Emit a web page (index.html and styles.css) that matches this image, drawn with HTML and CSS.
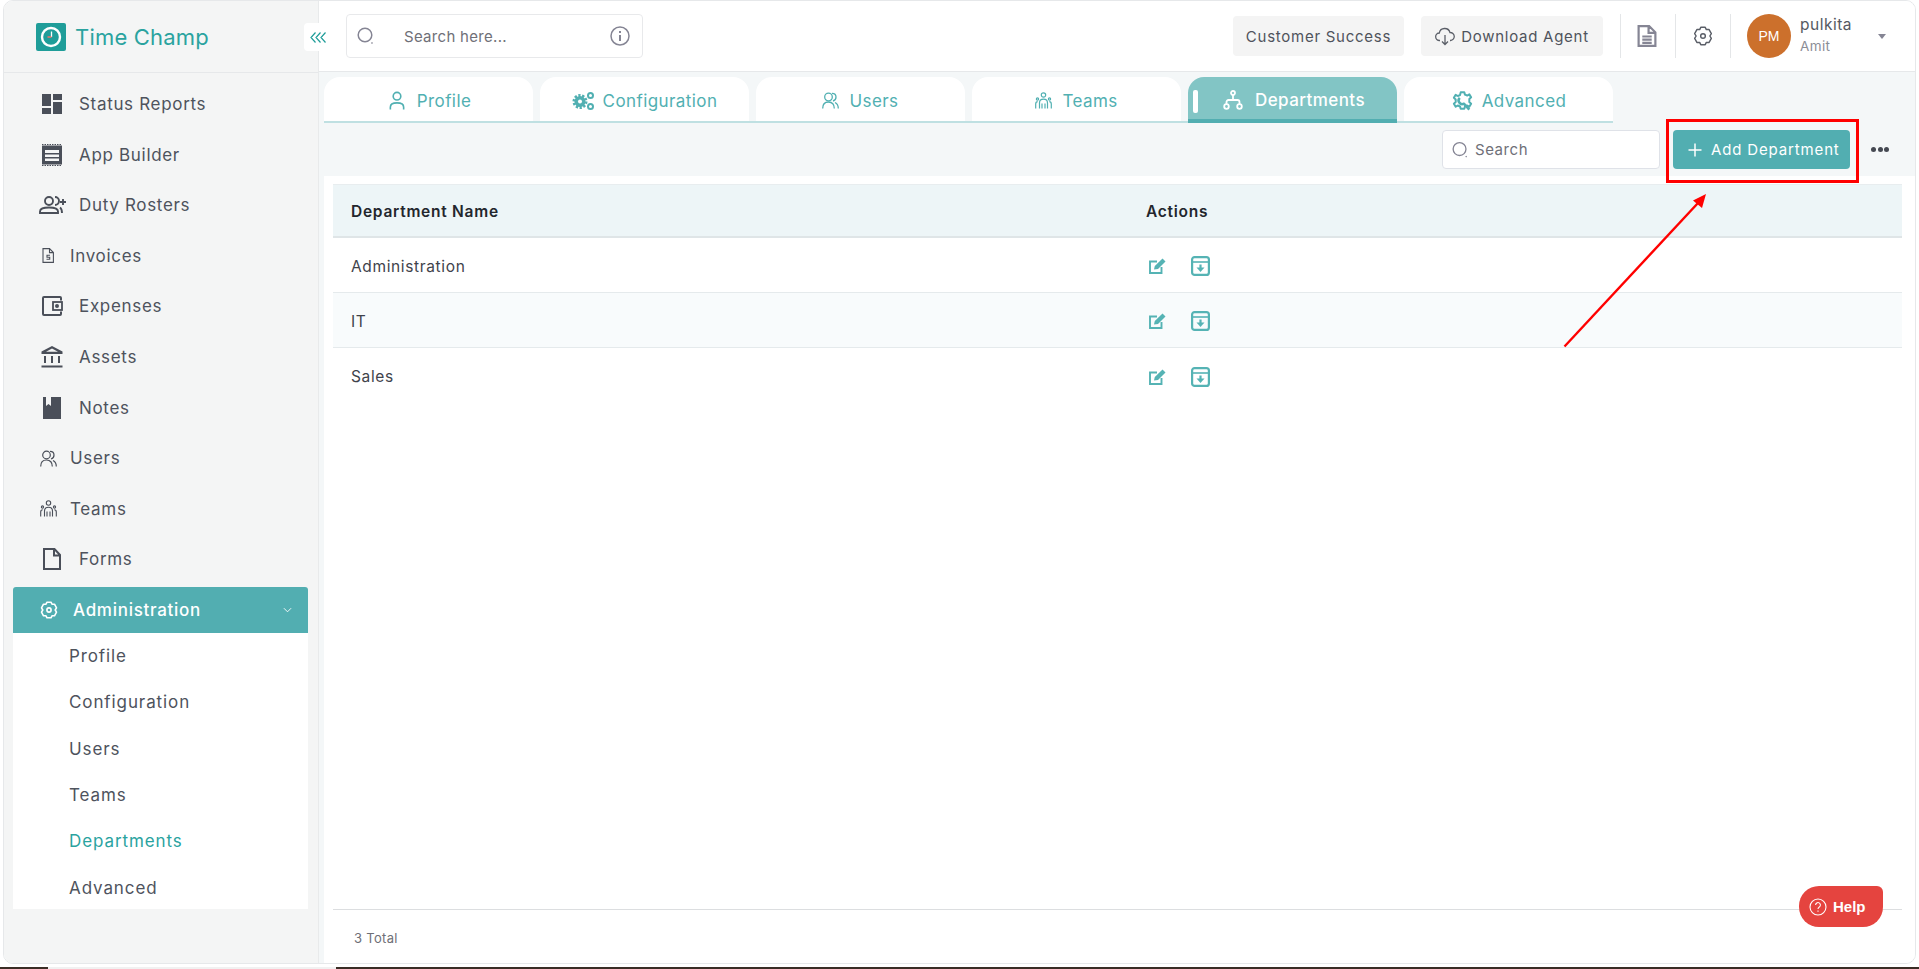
FILE: index.html
```html
<!DOCTYPE html>
<html lang="en">
<head>
<meta charset="utf-8">
<title>Time Champ</title>
<link rel="stylesheet" href="styles.css">
</head>
<body>
<div class="app">
  <aside class="sidebar">
    <div class="brand">
      <svg class="logo" viewBox="0 0 30 28"><rect width="30" height="28" rx="2" fill="#1f9d99"/><circle cx="15" cy="14" r="9" fill="none" stroke="#fff" stroke-width="2.400"/><path d="M15.500 8.500V14" fill="none" stroke="#fff" stroke-width="1.300"/><path d="M15.500 14H11.500" fill="none" stroke="#f0736b" stroke-width="1.300"/></svg>
      <span class="brand-name">Time Champ</span>
    </div>
    <nav class="nav">
      <a class="nav-item"><svg class="ic" viewBox="0 0 20 20" fill="#4a4f59"><path d="M0 0h9v12H0zM11 0h9v6h-9zM11 8h9v12h-9zM0 14h9v6H0z"/></svg><span>Status Reports</span></a>
      <a class="nav-item"><svg class="ic tall" viewBox="0 0 20 22" fill="#4a4f59"><path fill-rule="evenodd" d="M0 1.500h20v19H0zM3 6v3h14V6zM3 10.500V13h14v-2.500zM3 14.500V17h14v-2.500z"/><path d="M0 .500h20M0 21.500h20" stroke="#4a4f59" stroke-width="1.200" stroke-dasharray="1.500 1"/></svg><span>App Builder</span></a>
      <a class="nav-item"><svg class="ic wide" viewBox="0 0 27 18" fill="none" stroke="#4a4f59" stroke-width="1.900"><circle cx="10" cy="5" r="4"/><path d="M1 17v-1.500C1 12.500 4 11.500 10 11.500s9 1 9 4v1.500zM16 1a4 4 0 0 1 0 8M21 11.500c1.500 1 2 2.500 2 5.500M21 6h6M24 3v6"/></svg><span>Duty Rosters</span></a>
      <a class="nav-item small"><svg class="ic tiny" viewBox="0 0 12 15" fill="none" stroke="#4a4f59" stroke-width="1.100"><path d="M1 .600h6.500L11.400 4.500v9.900H1zM7.500.600v4h3.900M8 7.300H5v1.900h2.700v2H4.500"/></svg><span>Invoices</span></a>
      <a class="nav-item"><svg class="ic exp" viewBox="0 0 21 20" fill="none" stroke="#4a4f59" stroke-width="2"><path d="M19 4.500V2a1 1 0 0 0-1-1H2a1 1 0 0 0-1 1v16a1 1 0 0 0 1 1h16a1 1 0 0 0 1-1v-2.500"/><rect x="11" y="6" width="9" height="8" stroke-width="1.800"/><circle cx="15" cy="10" r="1" fill="#4a4f59"/></svg><span>Expenses</span></a>
      <a class="nav-item"><svg class="ic wide21" viewBox="0 0 22 22" fill="#4a4f59"><path d="M11 0l10.500 5.500V8H.500V5.500zM11 2.400L5 5.700h12zM3 10h2v7H3zM10 10h2v7h-2zM17 10h2v7h-2zM.500 19.500h21v2H.500z"/></svg><span>Assets</span></a>
      <a class="nav-item"><svg class="ic page" viewBox="0 0 18 22" fill="#4a4f59"><path fill-rule="evenodd" d="M0 0h18v22H0zM3 0v9l2.500-2L8 9V0z"/></svg><span>Notes</span></a>
      <a class="nav-item small"><svg class="ic users" viewBox="0 0 17 17" fill="none" stroke="#4a4f59" stroke-width="1.200"><circle cx="6.500" cy="5" r="3.800"/><path d="M.700 16.500c0-4 2-6.500 5.800-6.500s5.800 2.500 5.800 6.500M10 1.300c2.500 0 4 1.700 4 3.700S12.800 8.500 11 9M13 10.500c2 1 3.300 3 3.300 6"/></svg><span>Users</span></a>
      <a class="nav-item small"><svg class="ic users" viewBox="0 0 17 17" fill="none" stroke="#4a4f59" stroke-width="1.100"><circle cx="8.500" cy="3" r="2.200"/><circle cx="2.500" cy="7" r="1.100"/><circle cx="14.500" cy="7" r="1.100"/><path d="M4.500 16.500V11c0-2.500 1.500-3.800 4-3.800s4 1.300 4 3.800v5.500M7 16.500v-5M10 16.500v-5M.700 16.500v-4.500c0-1.500.800-2.300 2-2.300M16.300 16.500v-4.500c0-1.500-.800-2.300-2-2.300"/></svg><span>Teams</span></a>
      <a class="nav-item"><svg class="ic page" viewBox="0 0 18 22" fill="none" stroke="#4a4f59" stroke-width="2"><path d="M1 1h10.500L17 7v14H1zM11 1v6.500h6"/></svg><span>Forms</span></a>
      <a class="nav-admin">
        <svg class="ic admin-ic" viewBox="0 0 18 18" fill="none" stroke="#fff" stroke-width="1.600" stroke-linejoin="round"><path d="M7 1.200h4l1 2h2.500l2 3.600L15.200 9l1.300 2.200-2 3.600H12l-1 2H7l-1-2H3.500l-2-3.600L2.800 9 1.500 6.800l2-3.600H6z"/><circle cx="9" cy="9" r="2.100"/></svg>
        <span class="admin-label">Administration</span>
        <svg class="chev" viewBox="0 0 10 6" fill="none" stroke="#fff" stroke-width="1"><path d="M1 1l4 4 4-4"/></svg>
      </a>
      <div class="subnav">
        <a>Profile</a>
        <a>Configuration</a>
        <a>Users</a>
        <a>Teams</a>
        <a class="current">Departments</a>
        <a>Advanced</a>
      </div>
    </nav>
  </aside>

  <main class="main">
    <header class="topbar">
      <button class="collapse"><svg viewBox="0 0 16 11" fill="none" stroke="#1f9d99" stroke-width="1.200"><path d="M5.500.500L1 5.500l4.500 5M10.500.500L6 5.500l4.500 5M15.500.500L11 5.500l4.500 5"/></svg></button>
      <div class="global-search">
        <svg class="search-ic" viewBox="0 0 18 18" fill="none" stroke="#858594" stroke-width="1.500"><circle cx="8" cy="8" r="6.800"/><path d="M14.500 15.500l1 1"/></svg>
        <span class="placeholder">Search here...</span>
        <svg class="info-ic" viewBox="0 0 20 20" fill="none" stroke="#858594" stroke-width="1.500"><circle cx="10" cy="10" r="9"/><path d="M10 9v6M10 5v2" stroke-width="2"/></svg>
      </div>
      <div class="top-actions">
        <button class="ghost cs">Customer Success</button>
        <button class="ghost dl"><svg class="cloud" viewBox="0 0 20 20" fill="none" stroke="#5b5f68" stroke-width="1.300"><path d="M5 14.500H4.500A3.700 3.700 0 0 1 4.300 7 5.500 5.500 0 0 1 15 6.500a4 4 0 0 1 .5 8H15M10 9v9M7 15.500l3 3 3-3"/></svg>Download Agent</button>
        <span class="icon-cell shift"><svg class="doc" viewBox="0 0 18 21" fill="none" stroke="#858594" stroke-width="2.100"><path d="M1 1h10l6 6v13H1zM10.500 1v6.500H17M4.500 11h9M4.500 14h9M4.500 17h9"/></svg></span>
        <span class="icon-cell"><svg class="gear" viewBox="0 0 18 18" fill="none" stroke="#5b5f68" stroke-width="1.300" stroke-linejoin="round"><path d="M7 1.200h4l1 2h2.500l2 3.600L15.200 9l1.300 2.200-2 3.600H12l-1 2H7l-1-2H3.500l-2-3.600L2.800 9 1.500 6.800l2-3.600H6z"/><circle cx="9" cy="9" r="2.100"/></svg></span>
        <div class="user">
          <span class="avatar">PM</span>
          <span class="user-text"><b>pulkita</b><i>Amit</i></span>
          <span class="caret"></span>
        </div>
      </div>
    </header>

    <div class="tabs">
      <div class="tab-row">
        <a class="tab roomy"><svg class="t-profile" viewBox="0 0 16 20" fill="none" stroke="#51b0b2" stroke-width="1.700"><circle cx="8" cy="5.500" r="4"/><path d="M1 19.500v-2.500c0-3 2-4.500 7-4.500s7 1.500 7 4.500v2.500"/></svg>Profile</a>
        <a class="tab tight"><svg class="t-wide" viewBox="0 0 23 19" fill="#51b0b2"><circle cx="8" cy="10" r="6" stroke="#51b0b2" stroke-width="3" stroke-dasharray="2.200 1.500" fill="none"/><circle cx="8" cy="10" r="5.500"/><circle cx="8" cy="10" r="2" fill="#fff"/><circle cx="18.500" cy="4" r="2.500" fill="none" stroke="#51b0b2" stroke-width="2"/><circle cx="18.500" cy="15" r="2.500" fill="none" stroke="#51b0b2" stroke-width="2"/></svg>Configuration</a>
        <a class="tab"><svg class="t-team" viewBox="0 0 17 17" fill="none" stroke="#51b0b2" stroke-width="1.300"><circle cx="6.500" cy="5" r="3.800"/><path d="M.700 16.500c0-4 2-6.500 5.800-6.500s5.800 2.500 5.800 6.500M10 1.300c2.500 0 4 1.700 4 3.700S12.800 8.500 11 9M13 10.500c2 1 3.300 3 3.300 6"/></svg>Users</a>
        <a class="tab"><svg class="t-team" viewBox="0 0 17 17" fill="none" stroke="#51b0b2" stroke-width="1.200"><circle cx="8.500" cy="3" r="2.200"/><circle cx="2.500" cy="7" r="1.100"/><circle cx="14.500" cy="7" r="1.100"/><path d="M4.500 16.500V11c0-2.500 1.500-3.800 4-3.800s4 1.300 4 3.800v5.500M7 16.500v-5M10 16.500v-5M.700 16.500v-4.500c0-1.500.800-2.300 2-2.300M16.300 16.500v-4.500c0-1.500-.800-2.300-2-2.300"/></svg>Teams</a>
        <a class="tab roomy active"><span class="tab-mark"></span><svg class="t-dept" viewBox="0 0 20 20" fill="none" stroke="#fff" stroke-width="1.800"><circle cx="10" cy="3" r="2"/><circle cx="3.500" cy="16.500" r="2.300"/><circle cx="16.500" cy="16.500" r="2.300"/><path d="M10 5v5M3.500 14v-2a2 2 0 0 1 2-2h9a2 2 0 0 1 2 2v2"/></svg>Departments</a>
        <a class="tab tight"><svg class="t-wide" viewBox="0 0 22 22" fill="none" stroke="#51b0b2" stroke-linejoin="round"><path stroke-width="2.200" d="M9 1.500h4l.7 2.500 2.500 1 2.300-1.300 2 3.300-2 1.800v3.400l2 1.800-2 3.300-2.300-1.300-2.500 1-.7 2.500H9l-.7-2.500-2.500-1-2.300 1.300-2-3.300 2-1.800V9.300L1.500 7.500l2-3.300L5.800 5.500l2.500-1z"/><path stroke-width="2.800" d="M8 7.500a4 4 0 0 0 4.500 6.500l6 6.500"/></svg>Advanced</a>
      </div>
    </div>

    <div class="toolbar">
      <div class="search"><svg viewBox="0 0 18 18" fill="none" stroke="#858594" stroke-width="1.400"><circle cx="8" cy="8" r="6.800"/><path d="M14.500 15.500l1 1"/></svg><span>Search</span></div>
      <button class="add"><svg viewBox="0 0 14 14" fill="none" stroke="#fff" stroke-width="1.500"><path d="M7 .500v13M.500 7h13"/></svg>Add Department</button>
      <span class="dots"><i></i><i></i><i></i></span>
    </div>

    <section class="panel">
      <div class="table-wrap">
        <div class="row head"><span class="col-name">Department Name</span><span class="col-actions">Actions</span></div>
        <div class="row"><span class="col-name">Administration</span><span class="col-actions icons"><svg class="edit" viewBox="0 0 17 16" fill="none" stroke="#55b3b4" stroke-width="1.900"><path d="M12.500 9v6H1V3.500h7"/><path d="M5 11.500l.8-3.500L13.500.6 16.500 3.500 9 11z" fill="#55b3b4" stroke="none"/></svg><svg class="arch" viewBox="0 0 19 20" fill="none" stroke="#55b3b4" stroke-width="2.200"><rect x="1.100" y="1.100" width="16.800" height="17.800" rx="2.500"/><path d="M1 6h17" stroke-width="1.600"/><path d="M9.500 8.500v4" /><path d="M5.500 11.500h8L9.500 16z" fill="#55b3b4" stroke="none"/></svg></span></div>
        <div class="row alt"><span class="col-name">IT</span><span class="col-actions icons"><svg class="edit" viewBox="0 0 17 16" fill="none" stroke="#55b3b4" stroke-width="1.900"><path d="M12.500 9v6H1V3.500h7"/><path d="M5 11.500l.8-3.500L13.500.6 16.500 3.500 9 11z" fill="#55b3b4" stroke="none"/></svg><svg class="arch" viewBox="0 0 19 20" fill="none" stroke="#55b3b4" stroke-width="2.200"><rect x="1.100" y="1.100" width="16.800" height="17.800" rx="2.500"/><path d="M1 6h17" stroke-width="1.600"/><path d="M9.500 8.500v4" /><path d="M5.500 11.500h8L9.500 16z" fill="#55b3b4" stroke="none"/></svg></span></div>
        <div class="row last"><span class="col-name">Sales</span><span class="col-actions icons"><svg class="edit" viewBox="0 0 17 16" fill="none" stroke="#55b3b4" stroke-width="1.900"><path d="M12.500 9v6H1V3.500h7"/><path d="M5 11.500l.8-3.500L13.500.6 16.500 3.500 9 11z" fill="#55b3b4" stroke="none"/></svg><svg class="arch" viewBox="0 0 19 20" fill="none" stroke="#55b3b4" stroke-width="2.200"><rect x="1.100" y="1.100" width="16.800" height="17.800" rx="2.500"/><path d="M1 6h17" stroke-width="1.600"/><path d="M9.500 8.500v4" /><path d="M5.500 11.500h8L9.500 16z" fill="#55b3b4" stroke="none"/></svg></span></div>
      </div>
      <footer class="foot"><span>3 Total</span></footer>
    </section>
  </main>
</div>

<svg class="annotation" viewBox="0 0 1919 969" fill="none">
  <rect x="1667.500" y="120.500" width="190" height="61" stroke="#f00" stroke-width="3"/>
  <path d="M1564.500 346.500L1698 203" stroke="#f00" stroke-width="2.400"/>
  <path d="M1706 194l-13 6.500 9 7.500z" fill="#f00"/>
</svg>

<a class="help"><svg viewBox="0 0 18 18" fill="none" stroke="#fff" stroke-width="1.100"><circle cx="9" cy="9" r="8"/><path d="M6.600 7a2.400 2.400 0 1 1 3.700 2c-.9.600-1.300 1-1.300 2M9 12.500v1.300"/></svg>Help</a>
<div class="taskbar"><span class="tb-light"></span></div>
</body>
</html>
```

FILE: styles.css
```css
* { box-sizing: border-box; }
html, body { margin: 0; height: 969px; overflow: hidden; }
body {
  position: relative;
  background: #fff;
  font-family: "Inter", "Liberation Sans", sans-serif;
  color: #4a4f59;
}
a { display: block; }
button { font: inherit; border: 0; }
svg { display: block; flex: none; }

.app {
  display: flex;
  height: 964px;
  margin: 0 3px 0 3px;
  border: 1px solid #e6e8ea;
  border-radius: 10px;
  overflow: hidden;
  background: #fff;
}

/* Sidebar */
.sidebar {
  width: 315px;
  flex: none;
  background: #f4f5f5;
  border-right: 1px solid #e8eaeb;
}
.brand {
  height: 72px;
  display: flex;
  align-items: center;
  gap: 9px;
  padding-left: 32px;
  border-bottom: 1px solid #e6e8ea;
}
.logo { width: 30px; height: 28px; }
.brand-name { font-size: 22px; letter-spacing: .2px; color: #2aa39f; }
.nav { padding: 6px 10px 0 9px; }
.nav-item {
  height: 50.550px;
  display: flex;
  align-items: center;
  gap: 17px;
  padding-left: 29px;
  font-size: 17px;
  letter-spacing: .68px;
  color: #4e535d;
}
.nav-item.small { gap: 9px; }
.ic { width: 20px; height: 20px; }
.ic.tall { height: 22px; }
.ic.wide { width: 27px; height: 18px; margin-left: -3px; margin-right: -4px; }
.ic.exp { width: 21px; margin-right: -1px; }
.ic.wide21 { width: 22px; height: 22px; margin-left: -1px; margin-right: -1px; }
.ic.page { width: 18px; height: 22px; margin-left: 1px; margin-right: 1px; }
.ic.tiny { width: 12px; height: 15px; margin-right: 7px; }
.ic.users { width: 17px; height: 17px; margin-left: -2px; margin-right: 4px; }
.nav-admin {
  height: 46px;
  margin-top: 2.500px;
  display: flex;
  align-items: center;
  padding: 0 16px 0 27px;
  background: #52aeb1;
  border-radius: 3px 3px 0 0;
  color: #fff;
  font-size: 17px;
  letter-spacing: .72px;
  font-weight: 500;
}
.admin-ic { width: 18px; height: 18px; margin-right: 15px; }
.admin-label { flex: 1; }
.chev { width: 9px; height: 6px; }
.subnav {
  background: #fff;
  padding: 0 0 0 56px;
  height: 276px;
  font-size: 17px;
  letter-spacing: .9px;
  color: #4e535d;
}
.subnav a { height: 46.300px; display: flex; align-items: center; }
.subnav .current { color: #2aa39f; }

/* Main */
.main { flex: 1; min-width: 0; display: flex; flex-direction: column; background: #f4f7f8; }
.topbar {
  height: 71px;
  flex: none;
  display: flex;
  align-items: center;
  position: relative;
  padding-left: 27px;
  background: #fff;
  border-bottom: 1px solid #e6e8ea;
}
.collapse {
  position: absolute;
  left: -15px;
  top: 22px;
  width: 28px;
  height: 28px;
  display: flex;
  align-items: center;
  justify-content: center;
  background: #fff;
  border-radius: 4px;
  padding: 0;
}
.collapse svg { width: 16px; height: 11px; }
.global-search {
  width: 297px;
  height: 44px;
  display: flex;
  align-items: center;
  border: 1px solid #e8e9eb;
  border-radius: 4px;
  padding: 0 12px 0 10px;
}
.search-ic { width: 18px; height: 18px; margin-right: 29px; }
.placeholder { flex: 1; font-size: 15px; letter-spacing: .3px; color: #6f7078; }
.info-ic { width: 20px; height: 20px; }
.top-actions { margin-left: auto; display: flex; align-items: center; height: 100%; }
.ghost {
  height: 40px;
  display: flex;
  align-items: center;
  justify-content: center;
  gap: 6px;
  background: #f4f4f4;
  border-radius: 4px;
  padding: 0;
  margin-right: 17px;
  font-size: 15px;
  letter-spacing: .74px;
  color: #4f535c;
}
.ghost.cs { width: 171px; }
.ghost.dl { width: 182px; }
.cloud { width: 20px; height: 20px; }
.icon-cell {
  height: 44px;
  width: 55px;
  display: flex;
  align-items: center;
  justify-content: center;
  border-left: 1px solid #e4e6e8;
}
.icon-cell.shift { padding-right: 3px; }
.doc { width: 20px; height: 22px; }
.gear { width: 20px; height: 20px; }
.user { height: 44px; display: flex; align-items: center; border-left: 1px solid #e4e6e8; padding-left: 16px; padding-right: 29px; }
.avatar {
  width: 44px;
  height: 44px;
  border-radius: 50%;
  background: #cc702c;
  color: #fff;
  font-family: "Liberation Sans", sans-serif;
  font-size: 14px;
  display: flex;
  align-items: center;
  justify-content: center;
  margin-right: 9px;
}
.user-text { width: 78px; display: flex; flex-direction: column; gap: 4px; margin-top: -2px; }
.user-text b { font-weight: 400; font-size: 15.500px; line-height: 18px; letter-spacing: .5px; color: #555962; }
.user-text i { font-style: normal; font-size: 13.500px; line-height: 16px; letter-spacing: .4px; color: #8b8d96; }
.caret { width: 0; height: 0; border: 4px solid transparent; border-top: 5px solid #858594; margin-top: 4px; }

/* Tabs */
.tabs {
  height: 51px;
  flex: none;
  display: flex;
  padding: 5px 0 0 5px;
}
.tab-row {
  display: flex;
  gap: 7px;
  height: 46px;
  box-shadow: inset 0 -2px 0 #bfe0e2;
}
.tab {
  width: 209px;
  height: 46px;
  display: flex;
  align-items: center;
  justify-content: center;
  gap: 10px;
  padding-top: 3px;
  background: #fff;
  border-radius: 16px 16px 0 0;
  border-bottom: 2px solid #bfe0e2;
  font-size: 17px;
  letter-spacing: .42px;
  color: #51b0b2;
  position: relative;
}
.tab.roomy { gap: 12px; padding-left: 3px; }
.tab.tight { gap: 8px; }
.t-profile { width: 16px; height: 19px; }
.t-wide { width: 23px; height: 20px; }
.t-team { width: 17px; height: 17px; }
.t-dept { width: 20px; height: 20px; }
.tab.active {
  background: #82c5c5;
  color: #fff;
  border-bottom: 4px solid #52aeb1;
  font-weight: 500;
}
.tab-mark {
  position: absolute;
  left: 5px;
  top: 13px;
  width: 5px;
  height: 23px;
  background: #fff;
  border-radius: 2px;
}

/* Toolbar */
.toolbar {
  height: 53px;
  flex: none;
  display: flex;
  align-items: center;
  justify-content: flex-end;
  padding-right: 26px;
}
.search {
  width: 218px;
  height: 39px;
  display: flex;
  align-items: center;
  gap: 6px;
  background: #fff;
  border: 1px solid #dfe2e8;
  border-radius: 4px;
  padding-left: 9px;
  font-size: 15px;
  letter-spacing: .55px;
  color: #6f7078;
}
.search svg { width: 17px; height: 18px; }
.add {
  width: 177px;
  height: 39px;
  margin-left: 13px;
  margin-right: 21px;
  display: flex;
  align-items: center;
  gap: 9px;
  padding: 0 0 0 15px;
  background: #52aeb1;
  border-radius: 4px;
  color: #fff;
  font-size: 15px;
  letter-spacing: .85px;
}
.add svg { width: 14px; height: 14px; }
.dots { display: flex; gap: 1.500px; }
.dots i { width: 5px; height: 5px; border-radius: 50%; background: #454952; }

/* Panel + table */
.panel {
  flex: 1;
  margin-left: 5px;
  min-height: 0;
  background: #fff;
  display: flex;
  flex-direction: column;
}
.table-wrap { margin: 8px 13px 0 9px; flex: 1; }
.row {
  height: 55px;
  display: flex;
  align-items: center;
  padding-top: 2px;
  border-bottom: 1px solid #e5eaec;
  font-size: 15.500px;
  letter-spacing: .64px;
  color: #3f434b;
}
.row.head { height: 54px; background: #edf5f7; border-bottom: 2px solid #dfe5e7; border-top: 1px solid #e8edef; font-weight: 600; color: #23262d; letter-spacing: .74px; }
.row.alt { background: #f8fbfc; }
.row.last { border-bottom: 0; }
.col-name { width: 813px; padding-left: 18px; }
.col-actions { flex: 1; }
.icons { display: flex; align-items: center; gap: 25px; padding-left: 3px; }
.edit { width: 17px; height: 16px; }
.arch { width: 19px; height: 20px; }

.foot {
  height: 54px;
  flex: none;
  margin: 0 13px 0 9px;
  border-top: 1px solid #dcdee0;
  display: flex;
  align-items: center;
  padding: 3px 0 0 21px;
  font-size: 13px;
  letter-spacing: .3px;
  color: #6e6f76;
}

/* Overlays */
.annotation { position: absolute; left: 0; top: 0; width: 1919px; height: 969px; pointer-events: none; }
.help {
  position: absolute;
  left: 1799px;
  top: 886px;
  width: 84px;
  height: 41px;
  display: flex;
  align-items: center;
  gap: 6px;
  padding-left: 10px;
  background: #e5443f;
  border-radius: 20px 6px 20px 20px;
  color: #fff;
  font-family: "Liberation Sans", sans-serif;
  font-weight: 700;
  font-size: 15px;
}
.help svg { width: 18px; height: 18px; }
.taskbar {
  position: absolute;
  left: 0; right: 0; bottom: 0;
  height: 2.500px;
  background: #3a2d25;
}
.tb-light { display: block; margin-left: 48px; width: 288px; height: 3px; background: #f1f1f1; }
```
